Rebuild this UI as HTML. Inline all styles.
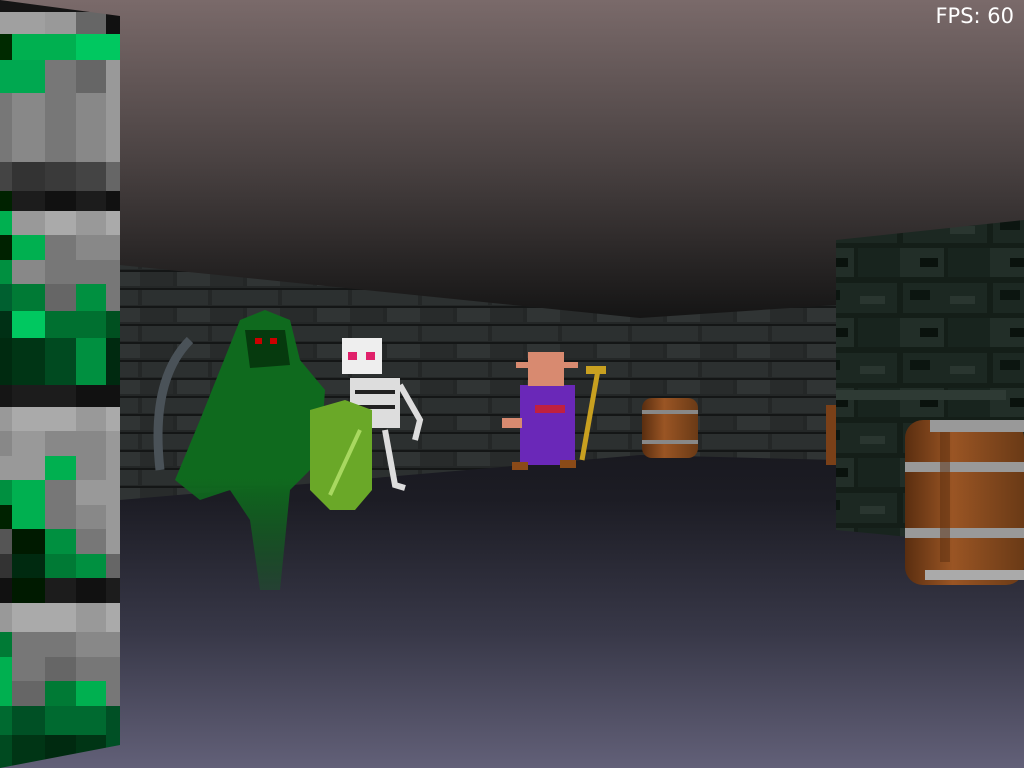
<!DOCTYPE html><html><head><meta charset="utf-8"><style>
html,body{margin:0;padding:0;background:#000;width:1024px;height:768px;overflow:hidden}
#fps{position:absolute;right:10px;top:4px;color:#fff;font:21px "DejaVu Sans","Liberation Sans",sans-serif}
</style></head><body>
<svg width="1024" height="768" viewBox="0 0 1024 768" style="position:absolute;left:0;top:0">
<defs>
<linearGradient id="ceil" x1="0" y1="0" x2="0" y2="1"><stop offset="0" stop-color="#7a6a6a"/><stop offset="0.5" stop-color="#4a4242"/><stop offset="1" stop-color="#141414"/></linearGradient>
<linearGradient id="floor" x1="0" y1="0" x2="0" y2="1"><stop offset="0" stop-color="#101014"/><stop offset="0.4" stop-color="#1c1c24"/><stop offset="0.7" stop-color="#383848"/><stop offset="1" stop-color="#626078"/></linearGradient>
<linearGradient id="ghost" x1="0" y1="0" x2="0" y2="1"><stop offset="0" stop-color="#0f6a1e"/><stop offset="0.6" stop-color="#0f6a1e"/><stop offset="1" stop-color="#0f6a1e" stop-opacity="0.3"/></linearGradient>
<pattern id="brick" width="70" height="36" patternUnits="userSpaceOnUse"><rect width="70" height="36" fill="#242727"/><rect x="2" y="2" width="66" height="15" fill="#2c3030"/><rect x="-33" y="20" width="66" height="14" fill="#282b2b"/><rect x="37" y="20" width="66" height="14" fill="#303434"/><rect width="70" height="2" fill="#141616"/><rect y="18" width="70" height="2" fill="#141616"/></pattern>
<pattern id="rbrick" width="90" height="70" patternUnits="userSpaceOnUse"><rect width="90" height="70" fill="#141e18"/><rect x="3" y="3" width="84" height="30" fill="#1c2822"/><rect x="10" y="10" width="20" height="10" fill="#0c1510"/><rect x="50" y="16" width="25" height="8" fill="#2a3630"/><rect x="-40" y="38" width="84" height="29" fill="#222e28"/><rect x="48" y="38" width="84" height="29" fill="#18241e"/><rect x="20" y="48" width="18" height="9" fill="#0a120d"/></pattern>
<linearGradient id="barrel" x1="0" y1="0" x2="1" y2="0"><stop offset="0" stop-color="#5a2e10"/><stop offset="0.4" stop-color="#9a5524"/><stop offset="1" stop-color="#6a3a16"/></linearGradient>
</defs>
<rect width="1024" height="320" fill="url(#ceil)"/>
<rect y="320" width="1024" height="448" fill="url(#floor)"/>
<polygon points="120,265 640,318 836,305 836,460 640,455 120,500" fill="url(#brick)"/>
<polygon points="836,240 1024,220 1024,548 836,530" fill="url(#rbrick)"/>
<rect x="836" y="390" width="170" height="10" fill="#2e3a34"/>
<rect x="642" y="398" width="56" height="60" rx="10" fill="url(#barrel)"/>
<rect x="642" y="410" width="56" height="4" fill="#888"/><rect x="642" y="440" width="56" height="4" fill="#888"/>
<rect x="826" y="405" width="10" height="60" fill="#7a4018"/>
<rect x="905" y="420" width="119" height="165" rx="18" fill="url(#barrel)"/>
<rect x="930" y="420" width="94" height="12" fill="#999"/>
<rect x="905" y="462" width="119" height="10" fill="#999"/>
<rect x="905" y="528" width="119" height="10" fill="#999"/>
<rect x="925" y="570" width="99" height="10" fill="#aaa"/>
<rect x="940" y="432" width="10" height="130" fill="#5a2e10" opacity="0.5"/>
<path d="M190,340 Q150,380 160,470" stroke="#4a5258" stroke-width="9" fill="none"/>
<path d="M240,320 L265,310 L290,320 L300,360 L325,390 L320,460 L290,490 L280,590 L260,590 L250,520 L230,490 L200,500 L175,480 L200,420 L220,370 Z" fill="url(#ghost)"/>
<path d="M245,330 L285,330 L290,365 L250,368 Z" fill="#063a0e"/>
<rect x="255" y="338" width="7" height="6" fill="#c00"/><rect x="270" y="338" width="7" height="6" fill="#c00"/>
<rect x="342" y="338" width="40" height="36" fill="#eee"/>
<rect x="348" y="352" width="9" height="8" fill="#e0206a"/><rect x="366" y="352" width="9" height="8" fill="#e0206a"/>
<rect x="350" y="378" width="50" height="50" fill="#ddd"/>
<rect x="355" y="390" width="40" height="4" fill="#222"/><rect x="355" y="405" width="40" height="4" fill="#222"/>
<path d="M400,385 L420,420 L415,440" stroke="#ddd" stroke-width="6" fill="none"/>
<path d="M385,430 L395,485 L405,488" stroke="#ddd" stroke-width="6" fill="none"/>
<path d="M310,410 L345,400 L372,410 L372,490 L355,510 L330,510 L310,490 Z" fill="#6aa828"/>
<path d="M330,495 L360,430" stroke="#a8d860" stroke-width="4"/>
<rect x="520" y="385" width="55" height="80" fill="#6a28b8"/>
<rect x="535" y="405" width="30" height="8" fill="#c02040"/>
<rect x="528" y="352" width="36" height="34" fill="#d88a70"/>
<rect x="516" y="362" width="14" height="6" fill="#d88a70"/><rect x="562" y="362" width="16" height="6" fill="#d88a70"/>
<rect x="502" y="418" width="20" height="10" fill="#d88a70"/>
<rect x="512" y="462" width="16" height="8" fill="#8a4a18"/><rect x="560" y="460" width="16" height="8" fill="#8a4a18"/>
<path d="M598,370 L582,460" stroke="#c8a020" stroke-width="5"/><rect x="586" y="366" width="20" height="8" fill="#c8a020"/>
<clipPath id="pc"><polygon points="0,0 120,16 120,745 0,768"/></clipPath>
<g clip-path="url(#pc)">
<g id="rows"></g>
</g>
</svg>
<div id="fps">FPS: 60</div>
<script>
var ys=[0,12,34,60,93,162,191,211,235,260,284,311,338,385,407,431,456,480,505,529,554,578,603,632,657,681,706,735,768];
var cs=[["#151515","#151515","#151515","#151515","#151515"],
["#a0a0a0","#a0a0a0","#999","#666","#111"],
["#002a00","#00b050","#00b050","#00c860","#00c860"],
["#00a850","#00a850","#777","#666","#999"],
["#777","#888","#777","#888","#999"],
["#444","#333","#3a3a3a","#444","#666"],
["#002200","#1c1c1c","#111","#1c1c1c","#111"],
["#00b050","#999","#aaa","#999","#aaa"],
["#002200","#00b050","#777","#888","#888"],
["#009040","#888","#777","#777","#777"],
["#006030","#007a35","#666","#009040","#777"],
["#003015","#00c860","#007030","#007030","#005020"],
["#002a10","#003515","#004a20","#009040","#002a10"],
["#151515","#1c1c1c","#1c1c1c","#111","#111"],
["#999","#aaa","#aaa","#999","#aaa"],
["#888","#999","#888","#888","#999"],
["#999","#999","#00b050","#888","#999"],
["#009040","#00b050","#777","#999","#999"],
["#002200","#00b050","#777","#888","#999"],
["#555","#001a00","#009040","#777","#999"],
["#333","#002a10","#007a35","#009040","#666"],
["#111","#001a00","#1c1c1c","#111","#1c1c1c"],
["#999","#aaa","#aaa","#999","#aaa"],
["#007a35","#777","#777","#888","#888"],
["#00b050","#777","#666","#777","#777"],
["#00b050","#666","#007a35","#00b050","#777"],
["#006a30","#005025","#006a30","#006a30","#005025"],
["#004a20","#003515","#002a10","#003515","#005025"]];
var xs=[0,12,45,76,106,120],s="";
for(var r=0;r<cs.length;r++)for(var c=0;c<5;c++)s+='<rect x="'+xs[c]+'" y="'+ys[r]+'" width="'+(xs[c+1]-xs[c])+'" height="'+(ys[r+1]-ys[r])+'" fill="'+cs[r][c]+'"/>';
document.getElementById("rows").innerHTML=s;
</script>
</body></html>
